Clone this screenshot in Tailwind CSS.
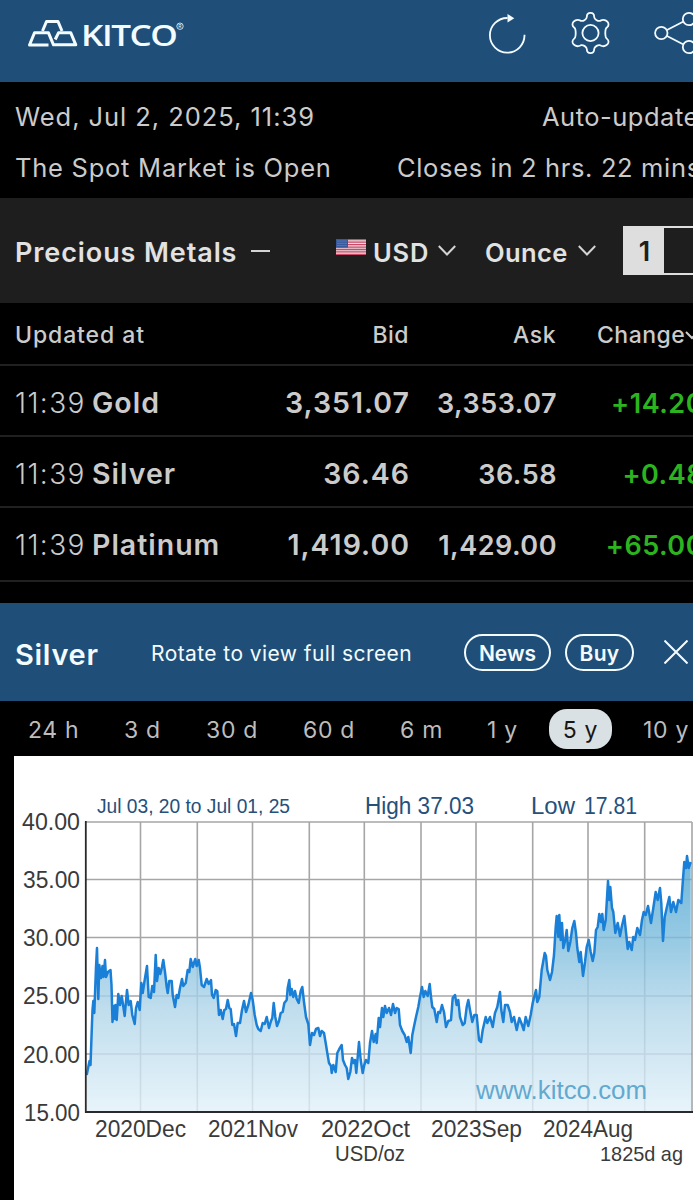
<!DOCTYPE html>
<html lang="en">
<head>
  <meta charset="UTF-8" />
  <meta name="viewport" content="width=device-width, initial-scale=1.0"/>
  <title>Kitco – Silver</title>
  <script src="https://cdn.jsdelivr.net/npm/@tailwindcss/browser@4"></script>
</head>
<body class="bg-black font-['Inter',sans-serif] text-[#cbcbcb] overflow-hidden">
<div class="w-[693px] h-[1200px] overflow-hidden whitespace-nowrap flex flex-col">

  <!-- HEADER -->
  <header class="h-[82px] shrink-0 bg-[#1f4f78] flex items-start">
    <svg class="w-[200px] h-[82px] shrink-0" viewBox="0 0 200 82" fill="none" stroke="#f4fbff" stroke-width="3" stroke-linejoin="round">
      <path d="M42.5 31 L46.5 21.5 H58 L62 31"/>
      <path d="M48.5 45 H29.5 L34.5 32.8 H48.5 L53.5 44.8 H75.8 L70.8 32.8 H58.5 L55.2 39.5"/>
      <text x="81" y="45.8" textLength="95.500" lengthAdjust="spacingAndGlyphs" class="font-['Open_Sans',sans-serif] text-[29px] font-semibold tracking-[-1.2px]" fill="#f4fbff" stroke="none">KITCO</text>
      <circle cx="180" cy="26.2" r="3.2" stroke-width="0.8"/>
      <text x="178.3" y="28.2" class="text-[5px]" fill="#f4fbff" stroke="none">R</text>
    </svg>
    <svg class="w-[230px] h-[82px] shrink-0 ml-[263px]" viewBox="463 0 230 82" fill="none" stroke="#f4fbff" stroke-width="1.8">
      <!-- refresh -->
      <path d="M524.5 34.8 A17.3 17.3 0 1 1 507.5 18"/>
      <path d="M507.5 14 L514.3 18.2 L507.5 22.5 Z" fill="#f4fbff" stroke="none"/>
      <!-- settings -->
      <circle cx="590.5" cy="33" r="8.1"/>
      <path stroke-linejoin="round" d="M586.8 17 C586.8 11.5 594.2 11.5 594.2 17 C594.4 19.2 597.6 21.3 600 20.9 C606 17.8 611.4 24 606.8 27.6 C604.8 28.6 604.8 37.6 606.8 38.6 C611.4 42.2 606 48.4 600 45.2 C597.6 44.8 594.4 46.8 594.2 49 C594.2 54.5 586.8 54.5 586.8 49 C586.6 46.8 583.4 44.8 581 45.2 C575 48.4 569.6 42.2 574.2 38.6 C576.2 37.6 576.2 28.6 574.2 27.6 C569.6 24 575 17.8 581 20.9 C583.4 21.3 586.6 19.2 586.8 17 Z"/>
      <!-- share -->
      <circle cx="661.3" cy="33" r="6.2"/>
      <circle cx="689" cy="19" r="6.2"/>
      <circle cx="689" cy="47" r="6.2"/>
      <path d="M667 30 L683.5 21.5 M667 36 L683.5 44.5"/>
    </svg>
  </header>

  <!-- MARKET STATUS -->
  <section class="h-[116px] shrink-0 pl-[15px] pt-[9px] text-[25.5px] leading-[51px] text-[#cbcbcb]">
    <div class="flex">
      <span class="w-[527px] shrink-0 tracking-[0.95px]">Wed, Jul 2, 2025, 11:39</span>
      <span class="tracking-[0.5px]">Auto-updates</span>
    </div>
    <div class="flex">
      <span class="w-[382px] shrink-0 tracking-[0.75px]">The Spot Market is Open</span>
      <span class="tracking-[0.65px]">Closes in 2 hrs. 22 mins.</span>
    </div>
  </section>

  <!-- FILTER BAR -->
  <section class="h-[105px] shrink-0 bg-[#1e1e1e] pl-[15px] flex items-center text-[27px] font-semibold text-[#e2e2e2] *:shrink-0">
    <span class="w-[236px] pt-[5px] tracking-[0.9px]">Precious Metals</span>
    <span class="w-[19px] h-[2px] bg-[#d4d4d4]"></span>
    <svg class="w-[30px] h-[16px] ml-[66px] -mt-[7px]" viewBox="0 0 30 16">
      <rect width="30" height="16" fill="#eadde2"/>
      <path d="M0 .7H30M0 3.2H30M0 5.7H30M0 8.1H30M0 10.5H30M0 12.9H30M0 15.3H30" stroke="#c94a66" stroke-width="1.3"/>
      <rect width="12" height="8.6" fill="#36589c"/>
      <path d="M1.5 2H11M1.5 4.3H11M1.5 6.6H11" stroke="#8da4cf" stroke-width=".8" stroke-dasharray="1 1"/>
    </svg>
    <span class="w-[65px] ml-[7px] pt-[5px] text-[25.5px] tracking-[0.8px]">USD</span>
    <svg class="w-[18px] h-[11px]" viewBox="0 0 18 11" fill="none" stroke="#d4d4d4" stroke-width="2"><path d="M.8 1 L9 9.5 L17.2 1"/></svg>
    <span class="w-[93px] ml-[29px] pt-[5px] text-[25.5px] tracking-[0.4px]">Ounce</span>
    <svg class="w-[18px] h-[11px]" viewBox="0 0 18 11" fill="none" stroke="#d4d4d4" stroke-width="2"><path d="M.8 1 L9 9.5 L17.2 1"/></svg>
    <div class="ml-[27px] w-[110px] h-[49px] border-2 border-[#dedede] flex">
      <span class="w-[39px] bg-[#dedede] text-[#1e1e1e] text-center leading-[48px]">1</span>
    </div>
  </section>

  <!-- SPOT PRICES -->
  <section class="h-[300px] shrink-0">
    <div class="h-[63px] pl-[15px] pt-[4px] border-b-2 border-[#202020] grid grid-cols-[394px_147px_147px] items-center text-[23px] font-medium">
      <div class="grid grid-cols-[1fr_auto]"><span class="tracking-[0.9px]">Updated at</span><span class="tracking-[0.5px]">Bid</span></div>
      <span class="text-right tracking-[0.5px]">Ask</span>
      <span class="flex items-center pl-[41px] tracking-[0.5px]">Change<svg class="w-[14px] h-[9px] shrink-0" viewBox="0 0 14 9" fill="none" stroke="#cbcbcb" stroke-width="2"><path d="M1 1 L7 7 L13 1"/></svg></span>
    </div>
    <div class="h-[71px] pl-[15px] pt-[16px] border-b-2 border-[#202020] grid grid-cols-[395px_147px_147px] items-baseline text-[28.5px] font-semibold tracking-[1px]">
      <div class="grid grid-cols-[77px_1fr_auto]"><span class="text-[28px] font-light tracking-[1.4px]">11:39</span><span>Gold</span><span>3,351.07</span></div>
      <span class="text-right text-[27px] tracking-[0.5px]">3,353.07</span>
      <span class="text-right text-[27px] tracking-[0.5px] text-[#2cb41f]">+14.20</span>
    </div>
    <div class="h-[71px] pl-[15px] pt-[16px] border-b-2 border-[#202020] grid grid-cols-[395px_147px_147px] items-baseline text-[28.5px] font-semibold tracking-[1px]">
      <div class="grid grid-cols-[77px_1fr_auto]"><span class="text-[28px] font-light tracking-[1.4px]">11:39</span><span>Silver</span><span>36.46</span></div>
      <span class="text-right text-[27px] tracking-[0.5px]">36.58</span>
      <span class="text-right text-[27px] tracking-[0.5px] text-[#2cb41f]">+0.48</span>
    </div>
    <div class="h-[74px] pl-[15px] pt-[16px] border-b-2 border-[#202020] grid grid-cols-[395px_147px_147px] items-baseline text-[28.5px] font-semibold tracking-[1px]">
      <div class="grid grid-cols-[77px_1fr_auto]"><span class="text-[28px] font-light tracking-[1.4px]">11:39</span><span>Platinum</span><span>1,419.00</span></div>
      <span class="text-right text-[27px] tracking-[0.5px]">1,429.00</span>
      <span class="text-right text-[27px] tracking-[0.5px] text-[#2cb41f]">+65.00</span>
    </div>
  </section>

  <!-- CHART TITLE -->
  <section class="h-[98px] shrink-0 bg-[#1f4f78] pl-[15px] flex items-center text-[#f4fbff] *:shrink-0">
    <span class="w-[136px] text-[29px] font-semibold tracking-[0.7px] pt-[5px]">Silver</span>
    <span class="w-[313px] text-[21px] tracking-[0.42px] pt-[4px]">Rotate to view full screen</span>
    <span class="w-[87px] h-[37px] rounded-full border-2 border-[#f4fbff] text-[21px] font-semibold flex items-center justify-center pt-[4px]">News</span>
    <span class="w-[69px] h-[37px] ml-[14px] rounded-full border-2 border-[#f4fbff] text-[21px] font-semibold tracking-[0.3px] flex items-center justify-center pt-[4px]">Buy</span>
    <svg class="w-[24px] h-[24px] ml-[30px]" viewBox="0 0 24 24" stroke="#f4fbff" stroke-width="2"><path d="M.5 .5 L23.5 23.5 M23.5 .5 L.5 23.5"/></svg>
  </section>

  <!-- PERIOD TABS -->
  <nav class="h-[55px] shrink-0 flex items-center text-[23px] tracking-[0.7px] text-[#bdbdbd] *:shrink-0">
    <a class="ml-[28px] w-[96px] pt-[3px]">24 h</a>
    <a class="w-[82px] pt-[3px]">3 d</a>
    <a class="w-[97px] pt-[3px]">30 d</a>
    <a class="w-[97px] pt-[3px]">60 d</a>
    <a class="w-[87px] pt-[3px]">6 m</a>
    <a class="w-[62px] pt-[3px]">1 y</a>
    <a class="w-[63px] h-[40px] pt-[3px] rounded-[18px] bg-[#d9e1e4] text-[#161616] flex items-center justify-center">5 y</a>
    <a class="ml-[31px] pt-[3px]">10 y</a>
  </nav>

  <!-- CHART -->
  <svg class="w-[679px] h-[444px] ml-[14px] shrink-0 bg-white font-['Liberation_Sans',Arial,sans-serif]" viewBox="14 756 679 444">
    <defs>
      <linearGradient id="fill" gradientUnits="userSpaceOnUse" x1="0" y1="856" x2="0" y2="1112">
        <stop offset="0" stop-color="#4ba3d0"/>
        <stop offset=".33" stop-color="#7dbddd"/>
        <stop offset=".6" stop-color="#b0d5e9"/>
        <stop offset="1" stop-color="#e2f1f9"/>
      </linearGradient>
    </defs>
    <path d="M86 822H692M86 879.5H692M86 937.5H692M86 996H692M86 1054H692M140.5 822V1112M197.3 822V1112M252.5 822V1112M309.3 822V1112M364.3 822V1112M421 822V1112M476 822V1112M532.7 822V1112M588 822V1112M644.7 822V1112M692 822V1112" stroke="#a6a6a6" stroke-width="1.6" fill="none"/>
    <polygon id="area" fill="url(#fill)" fill-opacity=".8"/>
    <polyline id="line" fill="none" stroke="#1a7fd6" stroke-width="2.5" stroke-linejoin="round"/>
    <path d="M85.8 821V1112H693" stroke="#2a2a2a" stroke-width="1.8" fill="none"/>

    <g fill="#25507c" font-size="20">
      <text x="97" y="813" textLength="193" lengthAdjust="spacingAndGlyphs">Jul 03, 20 to Jul 01, 25</text>
      <text x="365" y="814" font-size="23.5" textLength="109" lengthAdjust="spacingAndGlyphs">High 37.03</text>
      <text x="531" y="814" font-size="23.5" textLength="44" lengthAdjust="spacingAndGlyphs">Low</text>
      <text x="584" y="814" font-size="23.5" textLength="53" lengthAdjust="spacingAndGlyphs">17.81</text>
    </g>
    <g fill="#3a3a3a" font-size="24">
      <text x="22" y="830" textLength="58" lengthAdjust="spacingAndGlyphs">40.00</text>
      <text x="23" y="888" textLength="57" lengthAdjust="spacingAndGlyphs">35.00</text>
      <text x="23" y="946" textLength="57" lengthAdjust="spacingAndGlyphs">30.00</text>
      <text x="23" y="1004" textLength="57" lengthAdjust="spacingAndGlyphs">25.00</text>
      <text x="23" y="1062.500" textLength="57" lengthAdjust="spacingAndGlyphs">20.00</text>
      <text x="24" y="1120.500" textLength="56" lengthAdjust="spacingAndGlyphs">15.00</text>
      <text x="95" y="1137" textLength="91" lengthAdjust="spacingAndGlyphs">2020Dec</text>
      <text x="208" y="1137" textLength="90" lengthAdjust="spacingAndGlyphs">2021Nov</text>
      <text x="321" y="1137" textLength="89" lengthAdjust="spacingAndGlyphs">2022Oct</text>
      <text x="431" y="1137" textLength="91" lengthAdjust="spacingAndGlyphs">2023Sep</text>
      <text x="543" y="1137" textLength="90" lengthAdjust="spacingAndGlyphs">2024Aug</text>
      <text x="335" y="1160.500" font-size="22" textLength="70" lengthAdjust="spacingAndGlyphs">USD/oz</text>
      <text x="600" y="1160.500" font-size="21" textLength="83" lengthAdjust="spacingAndGlyphs">1825d ag</text>
    </g>
    <text x="476" y="1098.500" font-size="25" fill="#62a9d0" textLength="171" lengthAdjust="spacingAndGlyphs">www.kitco.com</text>
  </svg>
</div>

<script>
  const points = [
    "86.7,1075 88.3,1067 89.5,1061 90.5,1065 92,1023 92.5,1010 93.3,1001 94.3,1013 96,967 97,948 98.3,999 99.3,965 101,978 102.5,966 103.5,977 105,960 106,977 108,972 110.5,970 111.5,985 112.5,1022 114,1006 115,1019 115.5,1005 116.7,1020 118.3,994 120,1005 121.7,996 124.7,1016 127,990 128.7,1005 130.7,1001 132.3,1015 134.7,1024 136,1008 137.7,1002 139.7,1010",
    "141.3,983 142.7,993 144.7,980 147,966 148.7,997 150.7,998 152.3,986 154,992 155.7,955 157,981 158.7,968 160.3,974 162,967 163.3,960 165,972 166.7,987 167.7,993 169.3,981 171.7,981 172.7,995 175,1007 176.7,995 178.3,998 180,988 182,979 183.3,986 185.7,983 187.7,970 189.3,972 190.7,959 192.7,967 195.3,959 196.7,966 198.7,960 200,968",
    "201.7,985 204,987 206.7,979 208.7,984 211,980 212,995 213.7,998 215.7,990 217.3,991 219,1015 220.7,1010 222.7,1019 224.3,1010 226,1009 227.7,1000 229.3,1008 230.7,1009 232.3,1025 234,1024 236,1036 237.7,1023 240,1023 242,1010 244,1001 246,1012 248.3,1005 251,993 252.7,1000 254.7,1015 256.7,1025 258.3,1029 260.7,1031 262.7,1023 264.7,1024 266.7,1017 269,1028 271,1021 272.3,1018 273.7,1003 275.3,1017 277,1026 279,1021 280.7,1013 282.7,1012 284.3,1003 286.7,1000 287.7,988 289.3,980 290.3,995 291.7,989 293.3,997 295,991 296.7,999 298.7,1003 300.7,991 302.3,987 304,1002 306,1017 308.3,1024",
    "310,1045 312,1033 314,1035 316,1029 318.3,1028 320,1036 321.7,1031 324,1033 325.7,1043 327.3,1053 329,1063 331,1066 331.7,1073 333.3,1065 335.7,1072 337.3,1053 339.3,1049 341.7,1045 343,1060 345,1065 346.7,1068 348.3,1079 350.3,1072 352,1058 353.7,1063 355,1060 356.3,1073 357.7,1057 359,1042 360.7,1060 362.7,1073 364.3,1065 366,1060 368.3,1063 370,1043 372,1031 373.7,1042 375.7,1034 376.7,1043 378.7,1018 380,1027 382,1008 383.3,1017 385,1006 386.7,1013 389,1008 391,1015 393,1004 395,1013 396.7,1008 398.7,1009",
    "400,1025 402.3,1031 404.7,1035 406.7,1042 408.3,1037 410.7,1053 412.3,1035 414.3,1025 416,1017 418.3,1007 420,997 422,987 423.7,997 425.3,991 427.7,996 429.7,984 431,997 432.3,1007 434.3,1009 436.7,1022 438.3,1012 440,1013 442,1005 444,1012 446,1027 448.3,1021 451,1020 452.7,998 455,995 456.7,1005 458.3,1000 460,1017 462.7,1025 464.7,1023 466.7,1007 468.3,1000 470,1010 472.3,1022 474.3,1015 476.7,1015 479,1040 481,1042 482.7,1030 485.7,1017 487.3,1023 490,1017 492.7,1027 495,1013 497.3,1007 500,992 501.3,1010 503.3,1022 505,1005 507.7,1005 510,1012 511.7,1022 514,1017 516.7,1030 519.3,1018 521.7,1024 523.7,1030 525.7,1017 528.3,1026 530.7,1015 532.7,1003",
    "536,990 537.3,1002 539.3,997 541.7,970 544.7,953 546,956 547.3,970 550,980 552,972 554,955 555.7,927 556.7,916 558.3,937 559.3,915 560.7,940 562,923 563.3,948 565.3,940 566.7,930 568.3,951 570.3,942 572.3,928 574.3,921 576,933 577.3,948 579.3,962 580.7,952 583,976 585,962 586.7,947 588.7,940 590.7,952 592.7,961 594.3,953 596,930 597.7,927 599.3,914 601,922 602.3,914 603.7,930 605.7,920 608,881 609.3,900 610.3,887 612,908 613.3,912 615.3,933 617.7,923 620,936 621.7,927 624.3,916 626,932 627.7,949 629.3,942 631.7,950 633.3,937 635,940 637.3,928 640,935 642,920 643.7,912",
    "645.7,915 648,906 651,923 653.3,908 655.7,892 657.7,900 660,888 661.3,903 663,941 664.7,917 666.7,908 669.3,897 671,912 673.3,902 676,912 678.3,900 681.3,903 682.7,883 684.3,862 686,868 687,856 688.7,868 690.7,862"
  ].join(" ");
  document.getElementById("line").setAttribute("points", points);
  document.getElementById("area").setAttribute("points", "86.7,1111 " + points + " 691,1111");
</script>
</body>
</html>
